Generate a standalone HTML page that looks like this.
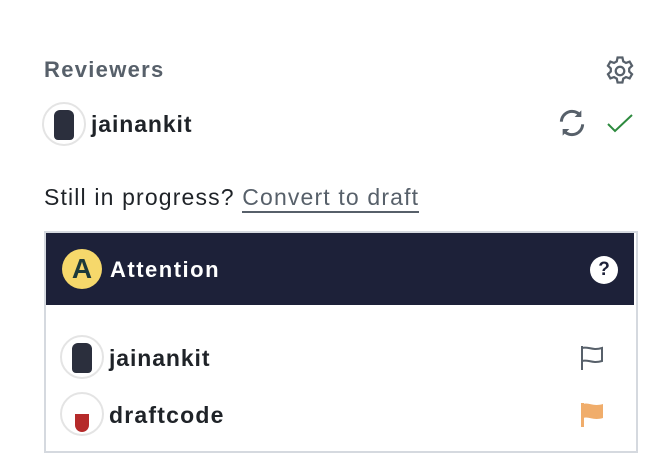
<!DOCTYPE html>
<html><head><style>
body{margin:0;width:668px;height:474px;background:#fff;font-family:"Liberation Sans",sans-serif;position:relative;overflow:hidden}
.a{position:absolute;white-space:nowrap}
.av{position:absolute;width:40px;height:40px;border-radius:50%;border:2px solid #e4e4e4;background:#fff;overflow:hidden}
</style></head><body>
<div class="a" style="left:44px;top:57px;font-size:22px;font-weight:bold;color:#57606a;letter-spacing:1.3px">Reviewers</div>
<svg class="a" style="left:603px;top:54px" width="34" height="34" viewBox="0 0 24 24" fill="none" stroke="#57606a" stroke-width="1.6"><circle cx="12" cy="12" r="3"/><path d="M10.3 2.5h3.4l.6 2.7 1.9 1.1 2.6-.9 1.7 2.9-2 1.9v2.2l2 1.9-1.7 2.9-2.6-.9-1.9 1.1-.6 2.7h-3.4l-.6-2.7-1.9-1.1-2.6.9-1.7-2.9 2-1.9v-2.2l-2-1.9 1.7-2.9 2.6.9 1.9-1.1z"/></svg>
<div class="av" style="left:42px;top:102px"><div style="position:absolute;left:10px;top:6px;width:20px;height:30px;background:#2b2f3d;border-radius:6px 6px 4px 4px"></div></div>
<div class="a" style="left:91px;top:111px;font-size:23px;font-weight:bold;color:#1f2328;letter-spacing:0.9px">jainankit</div>
<svg class="a" style="left:556px;top:107px" width="32" height="32" viewBox="0 0 24 24" fill="none" stroke="#57606a" stroke-width="2.2"><path d="M4 11a8 8 0 0 1 14-5"/><path d="M20 13a8 8 0 0 1-14 5"/><path d="M19 2.5v5h-5z" fill="#57606a" stroke="none"/><path d="M5 21.5v-5h5z" fill="#57606a" stroke="none"/></svg>
<svg class="a" style="left:606px;top:112px" width="28" height="24" viewBox="0 0 28 24" fill="none" stroke="#2d8a3e" stroke-width="2"><path d="M2 12l7 7L26 3"/></svg>
<div class="a" style="left:44px;top:184px;font-size:23px;color:#1f2328;letter-spacing:1.15px">Still in progress? <span style="color:#57606a;border-bottom:2px solid #57606a;padding-bottom:1px">Convert to draft</span></div>
<div class="a" style="left:44px;top:231px;width:590px;height:218px;border:2px solid #d5d9df"></div>
<div class="a" style="left:46px;top:233px;width:588px;height:72px;background:#1d2139"></div>
<div class="a" style="left:62px;top:249px;width:40px;height:40px;border-radius:50%;background:#f6d86b;color:#1d3a3a;font-weight:bold;font-size:28px;text-align:center;line-height:40px">A</div>
<div class="a" style="left:110px;top:257px;font-size:22px;font-weight:bold;color:#fff;letter-spacing:1.5px">Attention</div>
<div class="a" style="left:590px;top:256px;width:28px;height:28px;border-radius:50%;background:#fff;color:#1d2139;font-weight:bold;font-size:19px;text-align:center;line-height:28px">?</div>
<div class="av" style="left:60px;top:335px"><div style="position:absolute;left:10px;top:6px;width:20px;height:30px;background:#2b2f3d;border-radius:6px 6px 4px 4px"></div></div>
<div class="a" style="left:109px;top:345px;font-size:23px;font-weight:bold;color:#1f2328;letter-spacing:0.9px">jainankit</div>
<svg class="a" style="left:580px;top:345px" width="24" height="26" viewBox="0 0 24 26" fill="none" stroke="#57606a" stroke-width="2"><path d="M2 1v24M2 3c6-2 10 3 20 0v13c-10 3-14-2-20 0"/></svg>
<div class="av" style="left:60px;top:392px"><div style="position:absolute;left:13px;top:20px;width:14px;height:18px;background:#b52a2a;border-radius:0 0 7px 7px"></div></div>
<div class="a" style="left:109px;top:402px;font-size:23px;font-weight:bold;color:#1f2328;letter-spacing:1.2px">draftcode</div>
<svg class="a" style="left:580px;top:402px" width="24" height="26" viewBox="0 0 24 26"><path d="M1 1h3v24H1z" fill="#f0ad6b"/><path d="M3 2c6-2 10 3 20 0v14c-10 3-14-2-20 0z" fill="#f0ad6b"/></svg>
</body></html>
